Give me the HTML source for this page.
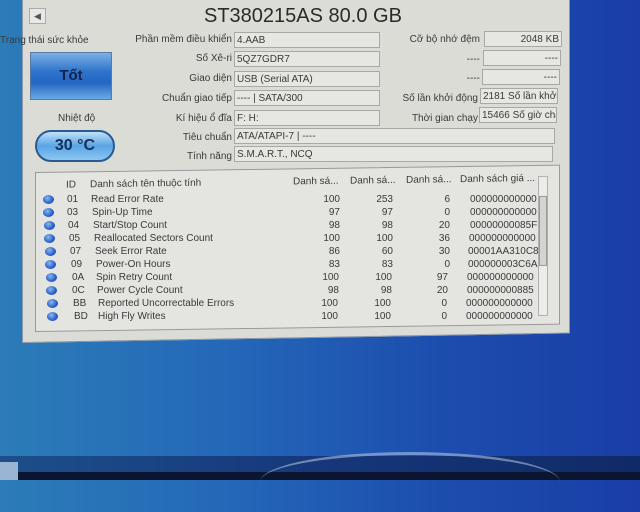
<!DOCTYPE html>
<html><head><meta charset="utf-8"><style>
*{margin:0;padding:0;box-sizing:border-box}
body{width:640px;height:480px;overflow:hidden;position:relative;font-family:"Liberation Sans","DejaVu Sans",sans-serif;background:linear-gradient(90deg,#2c7cb8 0%,#2468b8 35%,#1c4cae 70%,#1a3ea6 100%)}
.abs{position:absolute}
#panel{left:22px;top:-2px;width:548px;height:345px;background:#dcdcd6;border:1px solid #8a96a8;transform:skewY(-1deg);transform-origin:0 0}
.t{position:absolute;font-size:10px;color:#3a3a3a;white-space:nowrap}
.r{text-align:right}
.f{position:absolute;background:#e6e6e2;border:1px solid #a8a8a4;font-size:10px;color:#3a3a3a;padding:2px 2px;white-space:nowrap;overflow:hidden;height:16px}
.row{position:absolute;left:0;font-size:10px;color:#3a3a3a;height:13px;width:520px}
.row span{position:absolute;white-space:nowrap}
.dot{width:11px;height:9px;border-radius:50%;background:radial-gradient(circle at 40% 35%,#8ab8f0,#2a5ec8 60%,#1a3a90);top:1px}
</style></head><body>
<div class="abs" style="left:0;top:456px;width:640px;height:24px;background:linear-gradient(90deg,#1d4f8a,#16377a 50%,#102a66)"></div>
<div class="abs" style="left:0;top:472px;width:640px;height:8px;background:#0b1530"></div>
<div class="abs" style="left:0;top:462px;width:18px;height:18px;background:#9ab4d4"></div>
<div class="abs" style="left:260px;top:452px;width:300px;height:60px;border-top:3px solid rgba(200,215,240,.5);border-radius:50% 50% 0 0"></div>
<div id="panel" class="abs"></div>
<div class="abs" style="left:29px;top:8px;width:17px;height:16px;background:#e8e8e6;border:1px solid #aaa;font-size:9px;color:#555;text-align:center;line-height:14px">◀</div>
<div class="t" style="left:204px;top:5px;font-size:20px;color:#2a2a2a">ST380215AS 80.0 GB</div>
<div class="t" style="left:0;top:35px;width:94px;overflow:hidden">Trạng thái sức khỏe</div>
<div class="abs" style="left:30px;top:52px;width:82px;height:48px;background:linear-gradient(#7cb0e4,#2f74cc 40%,#2466c2 65%,#6aaae6);border:1px solid #5a7aa0;font-weight:bold;font-size:15px;color:#15224a;text-align:center;line-height:46px">Tốt</div>
<div class="t" style="left:58px;top:113px">Nhiệt độ</div>
<div class="abs" style="left:35px;top:130px;width:80px;height:32px;border-radius:16px;background:linear-gradient(#bfe0f8,#5aa4e4 50%,#8cc8f0);border:2px solid #2a5a90;font-weight:bold;font-size:16px;color:#14305a;text-align:center;line-height:28px">30 °C</div>

<div class="t r" style="left:120px;top:34px;width:112px">Phần mềm điều khiển</div><div class="f" style="left:234px;top:32px;width:146px">4.AAB</div>
<div class="t r" style="left:120px;top:53px;width:112px">Số Xê-ri</div><div class="f" style="left:234px;top:51px;width:146px">5QZ7GDR7</div>
<div class="t r" style="left:120px;top:73px;width:112px">Giao diện</div><div class="f" style="left:234px;top:71px;width:146px">USB (Serial ATA)</div>
<div class="t r" style="left:120px;top:93px;width:112px">Chuẩn giao tiếp</div><div class="f" style="left:234px;top:90px;width:146px">---- | SATA/300</div>
<div class="t r" style="left:120px;top:113px;width:112px">Kí hiệu ổ đĩa</div><div class="f" style="left:234px;top:110px;width:146px">F: H:</div>
<div class="t r" style="left:120px;top:132px;width:112px">Tiêu chuẩn</div><div class="f" style="left:234px;top:128px;width:321px">ATA/ATAPI-7 | ----</div>
<div class="t r" style="left:120px;top:151px;width:112px">Tính năng</div><div class="f" style="left:234px;top:146px;width:319px">S.M.A.R.T., NCQ</div>

<div class="t r" style="left:380px;top:34px;width:100px">Cỡ bộ nhớ đệm</div><div class="f r" style="left:484px;top:31px;width:78px">2048 KB</div>
<div class="t r" style="left:380px;top:54px;width:100px">----</div><div class="f r" style="left:483px;top:50px;width:78px">----</div>
<div class="t r" style="left:380px;top:73px;width:100px">----</div><div class="f r" style="left:482px;top:69px;width:78px">----</div>
<div class="t r" style="left:370px;top:93px;width:108px">Số lần khởi động</div><div class="f" style="left:480px;top:88px;width:78px">2181 Số lần khởi động</div>
<div class="t r" style="left:370px;top:113px;width:108px">Thời gian chạy</div><div class="f" style="left:479px;top:107px;width:78px">15466 Số giờ chạy</div>

<div class="abs" style="left:35px;top:172px;width:525px;height:160px;background:#e4e4e0;border:1px solid #999;transform:skewY(-0.8deg);transform-origin:0 0">
 <div class="row" style="top:7px"><span style="left:30px">ID</span><span style="left:54px">Danh sách tên thuộc tính</span><span style="left:257px">Danh sá...</span><span style="left:314px">Danh sá...</span><span style="left:370px">Danh sá...</span><span style="left:424px">Danh sách giá ...</span></div>
 <div class="abs" style="left:502px;top:10px;width:10px;height:140px;border:1px solid #b0b0b0;background:#ececea"></div>
 <div class="abs" style="left:503px;top:30px;width:8px;height:70px;background:#d4d4d0;border:1px solid #999"></div>
</div>
<div class="abs" style="left:40px;top:194px;width:510px;height:135px">
<div class="row" style="top:0"><span class="dot" style="left:3px"></span><span style="left:27px">01</span><span style="left:51px">Read Error Rate</span><span style="left:275px;width:25px;text-align:right">100</span><span style="left:325px;width:28px;text-align:right">253</span><span style="left:385px;width:25px;text-align:right">6</span><span style="left:430px">000000000000</span></div>
<div class="row" style="top:13px"><span class="dot" style="left:3px"></span><span style="left:27px">03</span><span style="left:52px">Spin-Up Time</span><span style="left:275px;width:25px;text-align:right">97</span><span style="left:325px;width:28px;text-align:right">97</span><span style="left:385px;width:25px;text-align:right">0</span><span style="left:430px">000000000000</span></div>
<div class="row" style="top:26px"><span class="dot" style="left:4px"></span><span style="left:28px">04</span><span style="left:53px">Start/Stop Count</span><span style="left:275px;width:25px;text-align:right">98</span><span style="left:325px;width:28px;text-align:right">98</span><span style="left:385px;width:25px;text-align:right">20</span><span style="left:430px">00000000085F</span></div>
<div class="row" style="top:39px"><span class="dot" style="left:4px"></span><span style="left:29px">05</span><span style="left:54px">Reallocated Sectors Count</span><span style="left:275px;width:25px;text-align:right">100</span><span style="left:325px;width:28px;text-align:right">100</span><span style="left:385px;width:25px;text-align:right">36</span><span style="left:429px">000000000000</span></div>
<div class="row" style="top:52px"><span class="dot" style="left:5px"></span><span style="left:30px">07</span><span style="left:55px">Seek Error Rate</span><span style="left:275px;width:25px;text-align:right">86</span><span style="left:325px;width:28px;text-align:right">60</span><span style="left:385px;width:25px;text-align:right">30</span><span style="left:428px">00001AA310C8</span></div>
<div class="row" style="top:65px"><span class="dot" style="left:5px"></span><span style="left:31px">09</span><span style="left:56px">Power-On Hours</span><span style="left:275px;width:25px;text-align:right">83</span><span style="left:325px;width:28px;text-align:right">83</span><span style="left:385px;width:25px;text-align:right">0</span><span style="left:428px">000000003C6A</span></div>
<div class="row" style="top:78px"><span class="dot" style="left:6px"></span><span style="left:32px">0A</span><span style="left:56px">Spin Retry Count</span><span style="left:274px;width:25px;text-align:right">100</span><span style="left:324px;width:28px;text-align:right">100</span><span style="left:383px;width:25px;text-align:right">97</span><span style="left:427px">000000000000</span></div>
<div class="row" style="top:91px"><span class="dot" style="left:6px"></span><span style="left:32px">0C</span><span style="left:57px">Power Cycle Count</span><span style="left:274px;width:25px;text-align:right">98</span><span style="left:324px;width:28px;text-align:right">98</span><span style="left:383px;width:25px;text-align:right">20</span><span style="left:427px">000000000885</span></div>
<div class="row" style="top:104px"><span class="dot" style="left:7px"></span><span style="left:33px">BB</span><span style="left:58px">Reported Uncorrectable Errors</span><span style="left:273px;width:25px;text-align:right">100</span><span style="left:323px;width:28px;text-align:right">100</span><span style="left:382px;width:25px;text-align:right">0</span><span style="left:426px">000000000000</span></div>
<div class="row" style="top:117px"><span class="dot" style="left:7px"></span><span style="left:34px">BD</span><span style="left:58px">High Fly Writes</span><span style="left:273px;width:25px;text-align:right">100</span><span style="left:323px;width:28px;text-align:right">100</span><span style="left:382px;width:25px;text-align:right">0</span><span style="left:426px">000000000000</span></div>
</div>
</body></html>
